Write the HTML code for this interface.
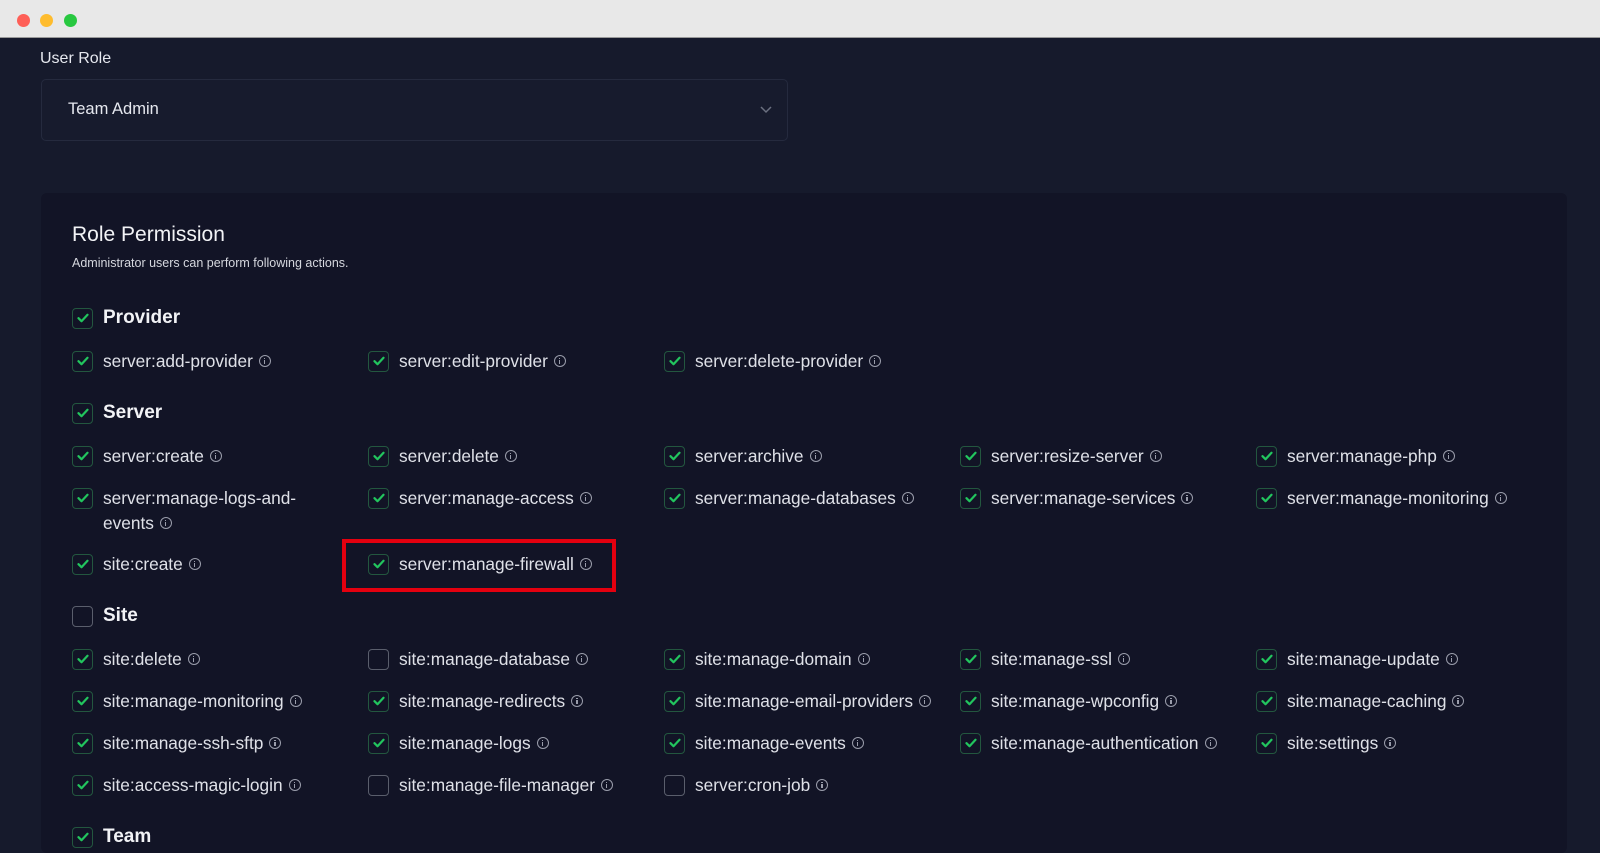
<!DOCTYPE html><html><head><meta charset="utf-8"><style>
*{margin:0;padding:0;box-sizing:border-box}
body{width:1600px;height:836px;overflow:hidden;background:#161a2c;font-family:"Liberation Sans",sans-serif;color:#e6e8ef;position:relative}
.bar{position:absolute;left:0;top:0;width:1600px;height:38px;background:#e8e8e8;border-bottom:1px solid #9a9a9a}
.dot{position:absolute;top:14px;width:13px;height:13px;border-radius:50%}
.sel{position:absolute;left:41px;top:79px;width:747px;height:62px;border:1px solid #252a3e;border-radius:5px;background:#171b2d}
.panel{position:absolute;left:41px;top:193px;width:1526px;height:660px;background:#121426;border-radius:6px}
.it{position:absolute;height:22px;display:flex;align-items:center;font-size:17.3px;color:#dfe1e8;white-space:nowrap}
.cb{width:21px;height:21px;border:1.5px solid #23573f;border-radius:4px;margin-right:10px;flex:none;display:flex;align-items:center;justify-content:center}
.cb.off{border-color:#5a5e6c}
.i{display:inline-block;width:12px;height:12px;border:1.3px solid #9a9dab;border-radius:50%;margin-left:6px;position:relative}
.i:after{content:"";position:absolute;left:4px;top:4px;width:1.4px;height:4px;background:#9a9dab}
.i:before{content:"";position:absolute;left:4px;top:1.5px;width:1.4px;height:1.4px;background:#9a9dab}
.h{font-weight:bold;font-size:19px;color:#f2f3f6}
.red{position:absolute;left:342px;top:539px;width:274px;height:53px;border:4px solid #e4000f}
</style></head><body>
<div class="bar"><div class="dot" style="left:17px;background:#fe5f57"></div><div class="dot" style="left:40px;background:#febc2e"></div><div class="dot" style="left:64px;background:#28c840"></div></div>
<div style="position:absolute;left:40px;top:50px;font-size:16px;color:#e6e8ef">User Role</div>
<div class="sel"><div style="position:absolute;left:26px;top:20px;font-size:16.5px">Team Admin</div>
<svg style="position:absolute;right:14px;top:25px" width="14" height="10" viewBox="0 0 14 10"><path d="M2 2l5 5 5-5" stroke="#6b7080" stroke-width="1.5" fill="none"/></svg></div>
<div class="panel"></div>
<div style="position:absolute;left:72px;top:223px;font-size:21px;color:#f2f3f6">Role Permission</div>
<div style="position:absolute;left:72px;top:256px;font-size:12.5px;color:#d5d7de">Administrator users can perform following actions.</div>
<div id="items"></div>
<div class="red"></div>
<script>
const C=[72,368,664,960,1256];
const rows=[
[318,[[0,'Provider',1,1]]],
[361,[[0,'server:add-provider',1],[1,'server:edit-provider',1],[2,'server:delete-provider',1]]],
[413,[[0,'Server',1,1]]],
[456,[[0,'server:create',1],[1,'server:delete',1],[2,'server:archive',1],[3,'server:resize-server',1],[4,'server:manage-php',1]]],
[498,[[0,'server:manage-logs-and-',1,0,1],[1,'server:manage-access',1],[2,'server:manage-databases',1],[3,'server:manage-services',1],[4,'server:manage-monitoring',1]]],
[564,[[0,'site:create',1],[1,'server:manage-firewall',1]]],
[616,[[0,'Site',0,1]]],
[659,[[0,'site:delete',1],[1,'site:manage-database',0],[2,'site:manage-domain',1],[3,'site:manage-ssl',1],[4,'site:manage-update',1]]],
[701,[[0,'site:manage-monitoring',1],[1,'site:manage-redirects',1],[2,'site:manage-email-providers',1],[3,'site:manage-wpconfig',1],[4,'site:manage-caching',1]]],
[743,[[0,'site:manage-ssh-sftp',1],[1,'site:manage-logs',1],[2,'site:manage-events',1],[3,'site:manage-authentication',1],[4,'site:settings',1]]],
[785,[[0,'site:access-magic-login',1],[1,'site:manage-file-manager',0],[2,'server:cron-job',0]]],
[837,[[0,'Team',1,1]]]];
const chk='<svg width="12" height="10" viewBox="0 0 12 10"><path d="M1.5 5.2l3 3L10.5 1.8" stroke="#22c55e" stroke-width="2.2" fill="none" stroke-linecap="round" stroke-linejoin="round"/></svg>';
let h='';
for(const [y,its] of rows)for(const [c,t,on,hd,wrap] of its){
 h+=`<div class="it" style="left:${C[c]}px;top:${y-11}px"><div class="cb${on?'':' off'}">${on?chk:''}</div><span class="${hd?'h':''}">${t}</span>${hd||wrap?'':'<span class="i"></span>'}</div>`;
 if(wrap)h+=`<div class="it" style="left:${C[c]+31}px;top:${y+14}px"><span>events</span><span class="i"></span></div>`;
}
document.getElementById('items').innerHTML=h;
</script>
</body></html>
